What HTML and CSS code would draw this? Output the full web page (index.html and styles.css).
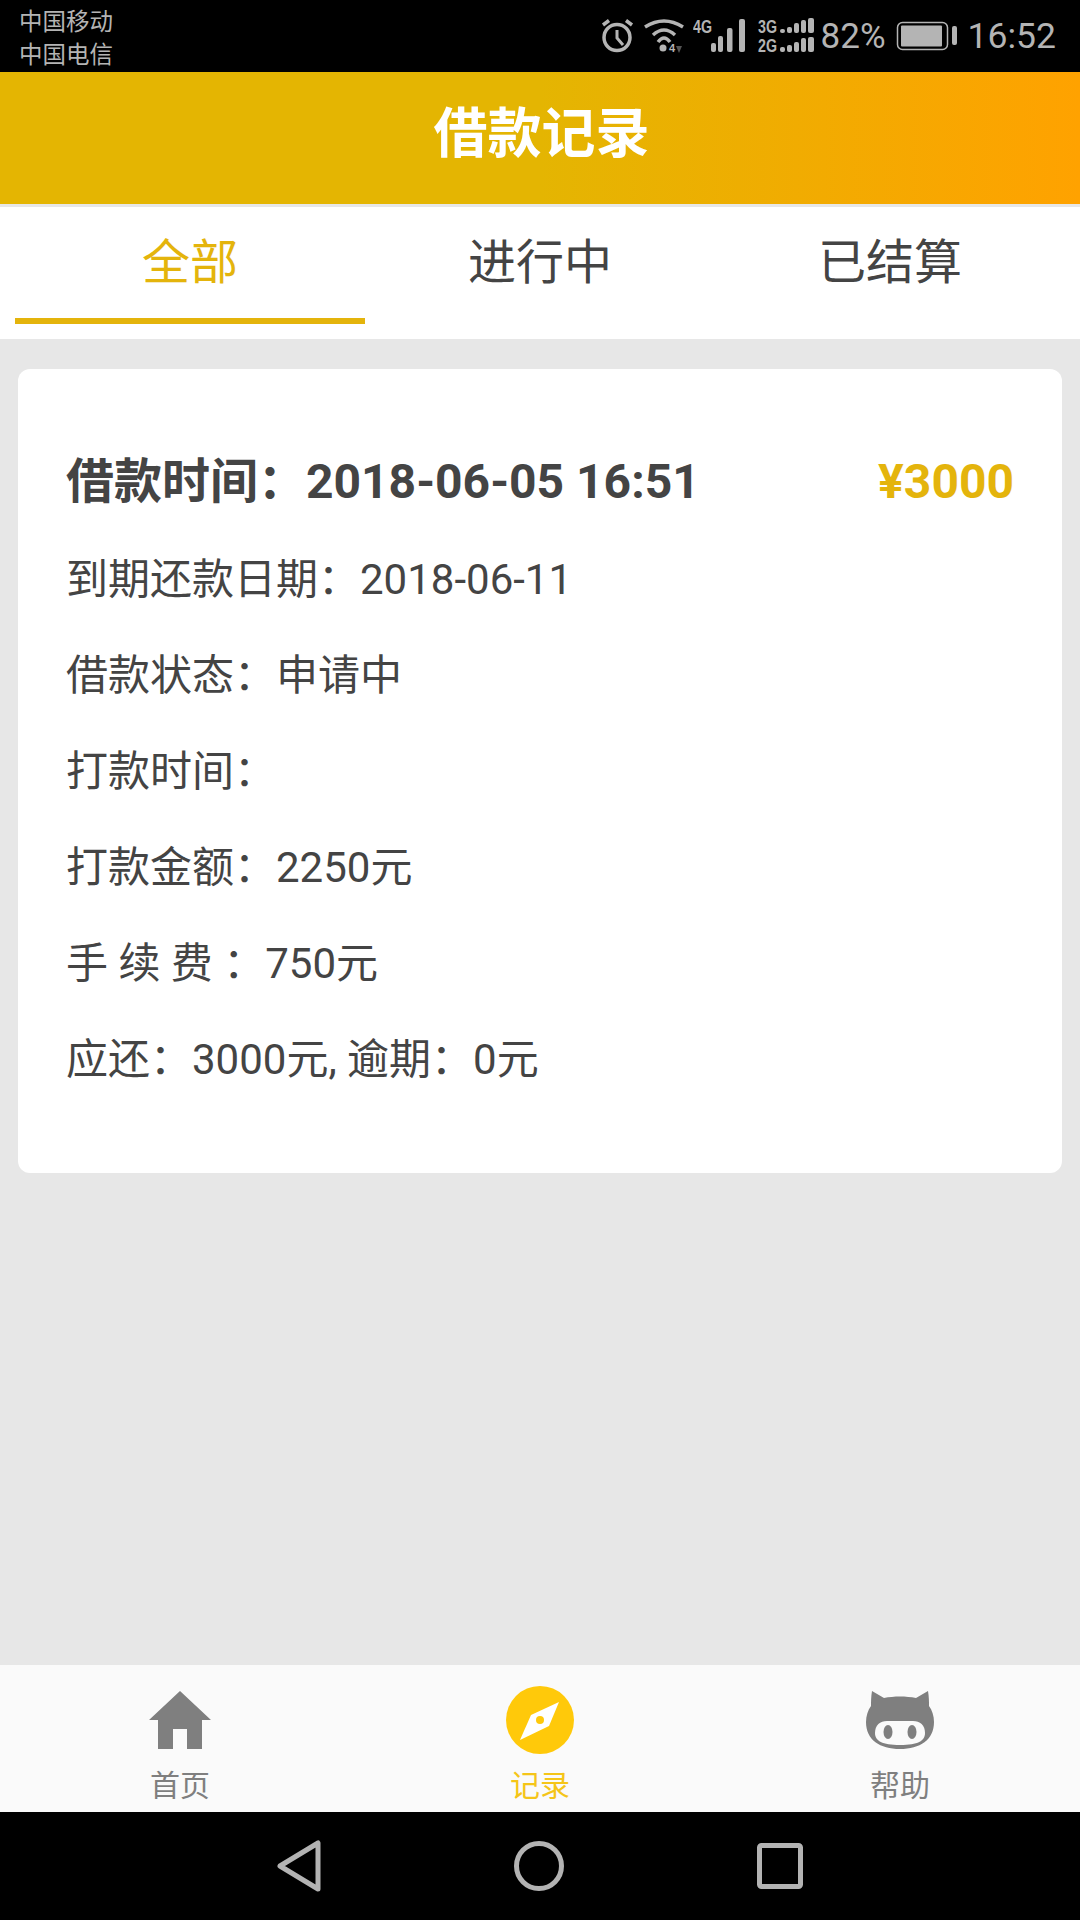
FILE: index.html
```html
<!DOCTYPE html>
<html lang="zh-CN">
<head>
  <meta charset="UTF-8">
  <meta name="viewport" content="width=device-width, initial-scale=1.0">
  <title>借款记录</title>
  <link rel="stylesheet" href="styles.css">
</head>
<body>
  <div class="app">
    <div class="status-bar">
      <div class="carriers">
        <div>中国移动</div>
        <div>中国电信</div>
      </div>
      <div class="status-icons">
        <!-- alarm -->
        <svg class="icon-alarm" width="34" height="36" viewBox="0 0 34 36" fill="none" stroke="#b4b4b4">
          <circle cx="16" cy="19.500" r="13" stroke-width="3.500"/>
          <path d="M16 12v8l6 7" stroke-width="3"/>
          <path d="M2 7l6-4.500M31 7l-6-4.500" stroke-width="3.500"/>
        </svg>
        <!-- wifi -->
        <svg class="icon-wifi" width="40" height="36" viewBox="0 0 40 36" fill="none" stroke="#b4b4b4" stroke-width="3.500">
          <path d="M1 9Q20-3 39 9"/>
          <path d="M9 17Q20 7 31 17"/>
          <path d="M14 24Q20 16 26 24"/>
          <circle cx="19" cy="30" r="3.500" fill="#b4b4b4" stroke="none"/>
          <text x="25" y="34" class="tiny-net">4</text>
          <path d="M32 28h6l-3 7z" fill="#555" stroke="none"/>
        </svg>
        <!-- 4G + signal -->
        <svg class="icon-signal" width="53" height="42" viewBox="0 -3 53 42" fill="#b4b4b4">
          <text transform="translate(0 15) scale(.75 1)" class="net-label">4G</text>
          <rect x="18" y="25" width="5" height="9" rx="2"/>
          <rect x="25" y="18" width="5" height="16" rx="2"/>
          <rect x="34" y="10" width="5.500" height="24" rx="2"/>
          <rect x="46" y="1" width="6" height="33" rx="2"/>
        </svg>
        <!-- 3G/2G dual signal -->
        <svg class="icon-signal-dual" width="58" height="42" viewBox="0 -3 58 42" fill="#b4b4b4">
          <text transform="translate(1 15) scale(.75 1)" class="net-label">3G</text>
          <text transform="translate(1 34) scale(.75 1)" class="net-label">2G</text>
          <rect x="23" y="11" width="5" height="4" rx="2"/>
          <rect x="30" y="9" width="5" height="6" rx="2"/>
          <rect x="37" y="5" width="5" height="10" rx="2"/>
          <rect x="44" y="2" width="5" height="13" rx="2"/>
          <rect x="51" y="0" width="6" height="15" rx="2"/>
          <rect x="23" y="29" width="5" height="5" rx="2"/>
          <rect x="30" y="27" width="5" height="7" rx="2"/>
          <rect x="37" y="24" width="5" height="10" rx="2"/>
          <rect x="44" y="20" width="5" height="14" rx="2"/>
          <rect x="51" y="19" width="6" height="15" rx="2"/>
        </svg>
        <span class="battery-text">82%</span>
        <!-- battery -->
        <svg class="icon-battery" width="62" height="30" viewBox="0 0 62 30">
          <rect x="1.500" y="1.500" width="50" height="27" rx="5" fill="none" stroke="#b4b4b4" stroke-width="1.500"/>
          <rect x="5" y="4.500" width="41" height="21" rx="1" fill="#b4b4b4"/>
          <rect x="56" y="5" width="5" height="19" rx="2" fill="#b4b4b4"/>
        </svg>
        <span class="clock">16:52</span>
      </div>
    </div>

    <div class="header">借款记录</div>

    <div class="tabs">
      <div class="tab active">全部</div>
      <div class="tab">进行中</div>
      <div class="tab">已结算</div>
    </div>

    <div class="content">
      <div class="card">
        <div class="row row-head">
          <span>借款时间：2018-06-05 16:51</span>
          <span class="amount">¥3000</span>
        </div>
        <div class="row">到期还款日期：2018-06-11</div>
        <div class="row">借款状态：申请中</div>
        <div class="row">打款时间：</div>
        <div class="row">打款金额：2250元</div>
        <div class="row">手 续 费 ：750元</div>
        <div class="row">应还：3000元, 逾期：0元</div>
      </div>
    </div>

    <div class="bottom-nav">
      <div class="nav-item">
        <div class="nav-icon">
          <svg width="62" height="58" viewBox="0 0 62 58" fill="#7f7f7f">
            <path d="M31 0L62 29H53V58H38V38H24V58H9V29H0z"/>
          </svg>
        </div>
        <span>首页</span>
      </div>
      <div class="nav-item active">
        <div class="nav-icon">
          <svg width="68" height="68" viewBox="0 0 68 68">
            <circle cx="34" cy="34" r="34" fill="#ffc90a"/>
            <path d="M53 16L43 40 14 54 25 29z" fill="#fff"/>
            <circle cx="34" cy="34" r="4" fill="#ffc90a"/>
          </svg>
        </div>
        <span>记录</span>
      </div>
      <div class="nav-item">
        <div class="nav-icon">
          <svg width="68" height="58" viewBox="0 0 68 58">
            <path d="M6 0L18 7C28 5 40 5 50 7L62 0C63 6 63 11 63 15C66 19 68 25 68 31C68 49 54 58 34 58C14 58 0 49 0 31C0 25 2 19 5 15C5 11 5 6 6 0z" fill="#7f7f7f"/>
            <path d="M9 42C9 34 14 30 21 30C27 30 41 30 47 30C54 30 59 34 59 42C59 50 52 54 34 54C16 54 9 50 9 42z" fill="#fafafa"/>
            <ellipse cx="22" cy="41" rx="4.500" ry="7" fill="#7f7f7f"/>
            <ellipse cx="46" cy="41" rx="4.500" ry="7" fill="#7f7f7f"/>
          </svg>
        </div>
        <span>帮助</span>
      </div>
    </div>

    <div class="system-nav">
      <svg width="44" height="52" viewBox="0 0 44 52" fill="none" stroke="#b3b3b3" stroke-width="5" stroke-linejoin="round">
        <path d="M41 3V49L3 26z"/>
      </svg>
      <svg width="50" height="50" viewBox="0 0 50 50" fill="none" stroke="#b3b3b3" stroke-width="5">
        <circle cx="25" cy="25" r="22.500"/>
      </svg>
      <svg width="46" height="46" viewBox="0 0 46 46" fill="none" stroke="#b3b3b3" stroke-width="5" stroke-linejoin="round">
        <rect x="2.500" y="2.500" width="41" height="41" rx="2"/>
      </svg>
    </div>
  </div>
</body>
</html>
```

FILE: styles.css
```css
* {
  box-sizing: border-box;
}
body {
  margin: 0;
  font-family: Roboto, "Noto Sans CJK SC", sans-serif;
  background-color: #e7e7e7;
}
.app {
  display: flex;
  flex-direction: column;
  width: 1080px;
  height: 1920px;
  overflow: hidden;
}

/* status bar */
.status-bar {
  display: flex;
  justify-content: space-between;
  align-items: center;
  height: 72px;
  padding: 0 24px 0 19px;
  background-color: #000;
  color: #b4b4b4;
}
.carriers {
  padding-top: 5px;
  font-size: 23.500px;
  line-height: 33px;
}
.status-icons {
  display: flex;
  align-items: center;
}
.icon-alarm,
.icon-wifi {
  margin-right: 9px;
}
.icon-signal {
  margin-right: 11px;
}
.icon-signal-dual {
  margin-right: 6px;
}
.net-label {
  font-family: "Liberation Sans", sans-serif;
  font-size: 19px;
  font-weight: bold;
}
.tiny-net {
  font-family: "Liberation Sans", sans-serif;
  font-size: 11px;
  font-weight: bold;
  fill: #b4b4b4;
  stroke: none;
}
.battery-text {
  font-size: 35px;
  margin-right: 10px;
}
.icon-battery {
  margin-right: 10px;
}
.clock {
  font-size: 35.500px;
}

/* title bar */
.header {
  display: flex;
  justify-content: center;
  align-items: center;
  height: 132px;
  padding: 0 0 17px 3px;
  background: linear-gradient(90deg, #e4b502 50%, #ffa200 100%);
  color: #fff;
  font-size: 54px;
  font-weight: bold;
}

/* tabs */
.tabs {
  display: flex;
  height: 133px;
  margin-top: 3px;
  padding: 0 15px;
  background-color: #fff;
  border-bottom: 1px solid #e7e7e7;
}
.tab {
  flex: 1;
  height: 117px;
  padding-top: 25px;
  text-align: center;
  color: #444;
  font-size: 48px;
  line-height: 62px;
}
.tab.active {
  color: #e4b40c;
  border-bottom: 6px solid #e4b40c;
}

/* record card */
.content {
  flex: 1;
  padding: 29px 18px 0;
}
.card {
  padding: 65px 48px 65px 48px;
  background-color: #fff;
  border-radius: 12px;
}
.row {
  height: 96px;
  color: #444;
  font-size: 42px;
  line-height: 96px;
}
.row-head {
  display: flex;
  justify-content: space-between;
  margin-bottom: 2px;
  font-size: 48px;
  font-weight: bold;
}
.amount {
  color: #e4b40c;
}

/* tab bar */
.bottom-nav {
  display: flex;
  height: 147px;
  padding-top: 21px;
  background-color: #fafafa;
}
.nav-item {
  display: flex;
  flex: 1;
  flex-direction: column;
  align-items: center;
  color: #7f7f7f;
  font-size: 30px;
  line-height: 40px;
}
.nav-item.active {
  color: #f5c518;
}
.nav-icon {
  display: flex;
  align-items: center;
  height: 68px;
  margin-bottom: 12px;
}

/* system navigation */
.system-nav {
  display: flex;
  justify-content: center;
  align-items: center;
  gap: 193px;
  height: 108px;
  background-color: #000;
}
```
